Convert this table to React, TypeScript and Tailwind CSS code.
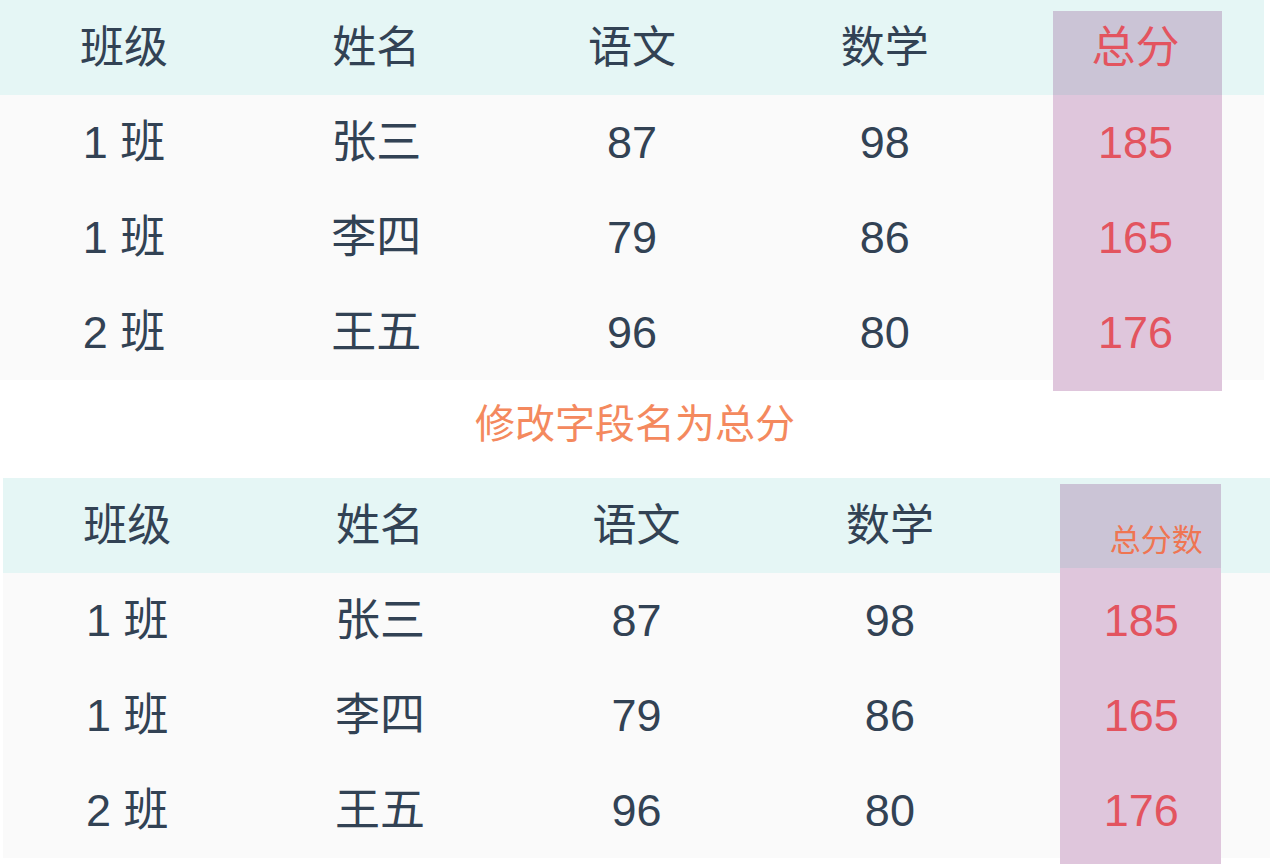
import React from 'react';

interface Row {
  cls: string;
  name: string;
  chinese: number;
  math: number;
  total: number;
}

const rows: Row[] = [
  { cls: '1 班', name: '张三', chinese: 87, math: 98, total: 185 },
  { cls: '1 班', name: '李四', chinese: 79, math: 86, total: 165 },
  { cls: '2 班', name: '王五', chinese: 96, math: 80, total: 176 },
];

const font = { fontFamily: '"Liberation Sans", "Noto Sans CJK SC", sans-serif' };

interface ScoreTableProps {
  totalLabel: string;
  small?: boolean;
  tableClass: string;
  overlayClass: string;
}

function ScoreTable({ totalLabel, small, tableClass, overlayClass }: ScoreTableProps) {
  const cell = 'flex items-center justify-center relative z-10';
  return (
    <div className={`relative ${tableClass}`}>
      {/* highlighted total column */}
      <div className={`absolute flex flex-col ${overlayClass}`}>
        <div className="h-[84px] bg-[#cbc4d6]" />
        <div className="flex-1 bg-[#dfc6dc]" />
      </div>

      {/* header */}
      <div className="grid grid-cols-5 h-[95px] bg-[#e5f6f5] text-[44px] text-[#324254]">
        <div className={`${cell} pr-[5px]`}>班级</div>
        <div className={`${cell} pr-[6px]`}>姓名</div>
        <div className={cell}>语文</div>
        <div className={cell}>数学</div>
        {small ? (
          <div className={`${cell} pt-[32px] pl-[26px] text-[31px] text-[#ef7552]`}>{totalLabel}</div>
        ) : (
          <div className={`${cell} pr-[4px] text-[#e3545f]`}>{totalLabel}</div>
        )}
      </div>

      {/* body */}
      <div className="bg-[#fafafa] text-[45px] text-[#324254]">
        {rows.map((r, i) => (
          <div key={i} className="grid grid-cols-5 h-[95px]">
            <div className={`${cell} pr-[5px]`}>{r.cls}</div>
            <div className={`${cell} pr-[6px]`}>{r.name}</div>
            <div className={cell}>{r.chinese}</div>
            <div className={cell}>{r.math}</div>
            <div className={`${cell} pr-[4px] text-[#e3545f]`}>{r.total}</div>
          </div>
        ))}
      </div>
    </div>
  );
}

export default function App() {
  return (
    <div className="w-[1270px] h-[864px] bg-white overflow-hidden" style={font}>
      <ScoreTable
        totalLabel="总分"
        tableClass="w-[1264px]"
        overlayClass="left-[1053px] top-[11px] w-[169px] h-[380px]"
      />

      <div className="h-[98px] flex items-center justify-center pb-[10px] text-[40px] text-[#f4895e]">
        修改字段名为总分
      </div>

      <ScoreTable
        totalLabel="总分数"
        small
        tableClass="ml-[3px] w-[1267px]"
        overlayClass="left-[1057px] top-[6px] w-[161px] h-[390px]"
      />
    </div>
  );
}
